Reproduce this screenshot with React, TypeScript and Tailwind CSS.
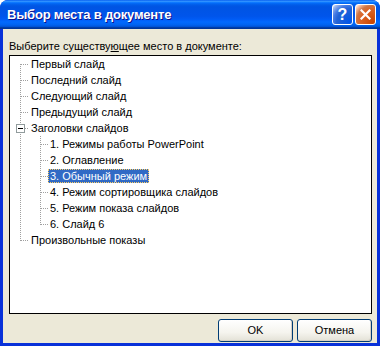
import React from 'react';

type Row = { label: string; level: 0 | 1; last?: boolean; expander?: boolean; selected?: boolean; first?: boolean };

const rows: Row[] = [
  { label: 'Первый слайд', level: 0, first: true },
  { label: 'Последний слайд', level: 0 },
  { label: 'Следующий слайд', level: 0 },
  { label: 'Предыдущий слайд', level: 0 },
  { label: 'Заголовки слайдов', level: 0, expander: true },
  { label: '1. Режимы работы PowerPoint', level: 1 },
  { label: '2. Оглавление', level: 1 },
  { label: '3. Обычный режим', level: 1, selected: true },
  { label: '4. Режим сортировщика слайдов', level: 1 },
  { label: '5. Режим показа слайдов', level: 1 },
  { label: '6. Слайд 6', level: 1, last: true },
  { label: 'Произвольные показы', level: 0, last: true },
];

const dot = { stroke: '#a0a0a0', strokeWidth: 1, strokeDasharray: '1 1', shapeRendering: 'crispEdges' as const };

function Gutter({ row }: { row: Row }) {
  const w = row.level === 0 ? 19 : 38;
  return (
    <svg width={w} height={16} className="shrink-0">
      {row.level === 0 ? (
        <>
          <line x1={10.5} y1={row.first ? 8 : 0} x2={10.5} y2={row.last ? 9 : 16} {...dot} />
          <line x1={row.expander ? 15 : 11} y1={8.5} x2={19} y2={8.5} {...dot} />
          {row.expander && (
            <>
              <rect x={6.5} y={4.5} width={8} height={8} fill="#fff" stroke="#919b9c" shapeRendering="crispEdges" />
              <line x1={8} y1={8.5} x2={13} y2={8.5} stroke="#000" shapeRendering="crispEdges" />
            </>
          )}
        </>
      ) : (
        <>
          <line x1={10.5} y1={0} x2={10.5} y2={16} {...dot} />
          <line x1={30.5} y1={0} x2={30.5} y2={row.last ? 9 : 16} {...dot} />
          <line x1={31} y1={8.5} x2={38} y2={8.5} {...dot} />
        </>
      )}
    </svg>
  );
}

function TitleButton({ kind }: { kind: 'help' | 'close' }) {
  const bg =
    kind === 'help'
      ? 'bg-[radial-gradient(circle_at_90%_90%,#0054e9_0%,#2263d5_55%,#4479e4_70%,#a3bbec_90%,#ffffff_100%)]'
      : 'bg-[radial-gradient(circle_at_90%_90%,#cc4600_0%,#dc6527_55%,#cd7546_70%,#ffccb2_90%,#ffffff_100%)]';
  return (
    <div className={`w-[21px] h-[21px] rounded-[3px] border border-white flex items-center justify-center ${bg}`}>
      {kind === 'help' ? (
        <span className="text-white font-bold text-[16px] leading-none font-['Liberation_Sans',sans-serif]">?</span>
      ) : (
        <svg width="11" height="11" viewBox="0 0 11 11">
          <path d="M1.5 1.5 L9.5 9.5 M9.5 1.5 L1.5 9.5" stroke="#fff" strokeWidth="2.2" strokeLinecap="square" />
        </svg>
      )}
    </div>
  );
}

function XPButton({ children }: { children: React.ReactNode }) {
  return (
    <button className="w-[75px] h-[23px] rounded-[3px] border border-[#003c74] bg-[linear-gradient(180deg,#ffffff_0%,#f5f4ee_60%,#e3e1d6_100%)] shadow-[inset_-1px_-1px_0_#d6d0c5] text-[11px] text-black">
      {children}
    </button>
  );
}

export default function App() {
  return (
    <div className="w-[380px] h-[346px] flex flex-col bg-[#0831d9] rounded-t-[8px] overflow-hidden font-['Liberation_Sans',Arial,sans-serif]">
      <div className="h-[29px] shrink-0 flex items-center justify-between pl-[7px] pr-[4px] bg-[linear-gradient(180deg,#0058ee_0%,#3593ff_4%,#288eff_6%,#127dff_8%,#036ffc_10%,#0262ee_14%,#0057e5_20%,#0054e3_24%,#0055eb_56%,#005bf5_66%,#026afe_76%,#0062ef_86%,#0052d6_92%,#0040ab_94%,#003092_100%)]">
        <span className="text-white font-bold text-[13px] tracking-[-0.2px] [text-shadow:1px_1px_#0f1089]">Выбор места в документе</span>
        <div className="flex gap-[2px]">
          <TitleButton kind="help" />
          <TitleButton kind="close" />
        </div>
      </div>
      <div className="flex-1 mx-[3px] mb-[3px] bg-[#ece9d8] flex flex-col pt-[11px] pl-[6px] pr-[5px]">
        <div className="text-[11px] leading-[13px] text-black">
          Выберите существу<u>ю</u>щее место в документе:
        </div>
        <div className="mt-[2px] h-[259px] bg-white border border-black">
          {rows.map((row) => (
            <div key={row.label} className="h-[16px] flex items-center">
              <Gutter row={row} />
              <span
                className={`h-[14px] px-[2px] text-[11px] leading-[14px] whitespace-nowrap ${
                  row.selected ? 'bg-[#316ac5] text-white outline outline-1 outline-dotted outline-[#ffd065] -outline-offset-1' : 'text-black'
                }`}
              >
                {row.label}
              </span>
            </div>
          ))}
        </div>
        <div className="flex justify-end gap-[4px] mt-[5px]">
          <XPButton>OK</XPButton>
          <XPButton>Отмена</XPButton>
        </div>
      </div>
    </div>
  );
}
